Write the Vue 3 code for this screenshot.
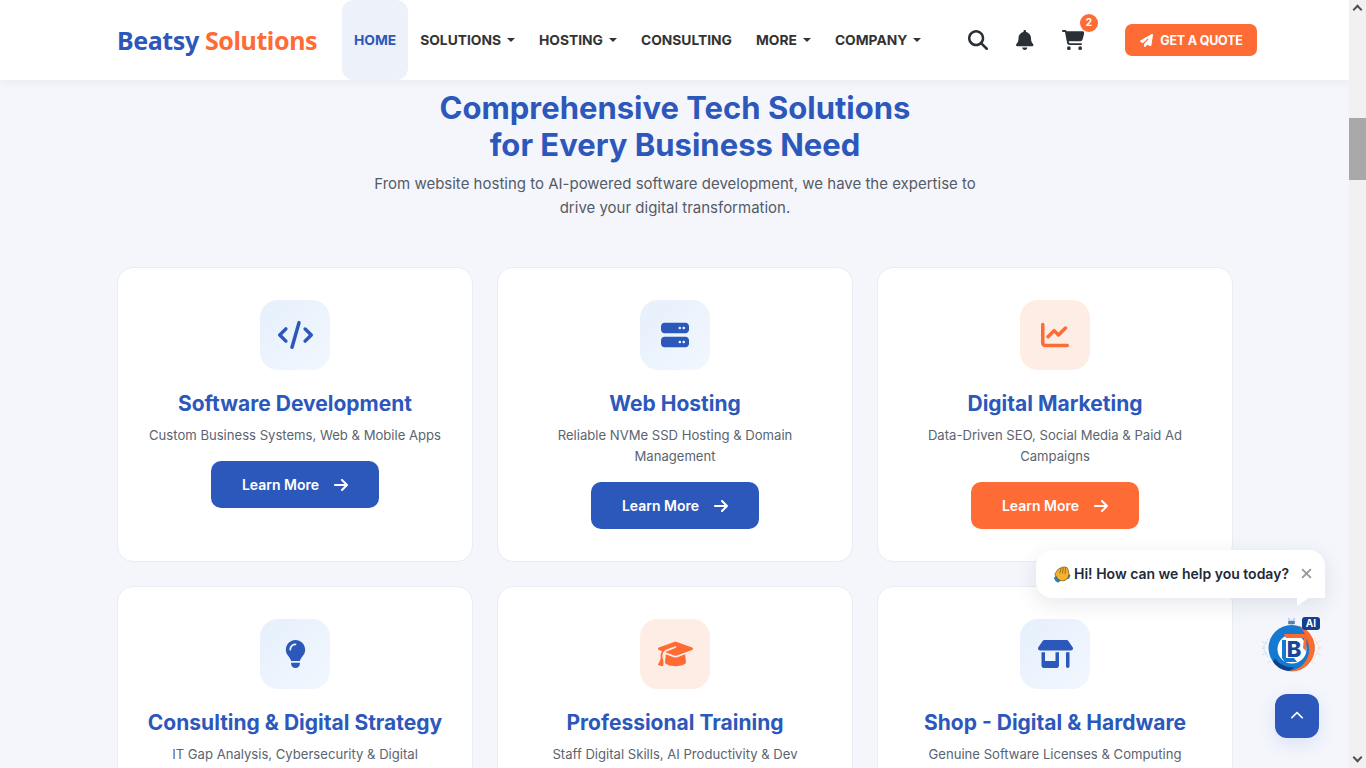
<template>
  <div class="page">
    <div class="viewport">
      <header class="topbar">
        <a href="#" class="logo">Beatsy <span>Solutions</span></a>
        <nav class="nav">
          <a v-for="item in navItems" :key="item.label" href="#" class="nav-link" :class="{ active: item.active }">
            {{ item.label }}
            <i v-if="item.caret" class="caret"></i>
          </a>
        </nav>
        <div class="tools">
          <svg class="tool search" viewBox="0 0 512 512"><path :d="icons.search" /></svg>
          <svg class="tool bell" viewBox="0 0 448 512"><path :d="icons.bell" /></svg>
          <div class="cart">
            <svg class="tool" viewBox="0 0 576 512"><path :d="icons.cart" /></svg>
            <span class="badge">2</span>
          </div>
        </div>
        <a href="#" class="quote">
          <svg viewBox="0 0 512 512"><path :d="icons.plane" /></svg>
          GET A QUOTE
        </a>
      </header>

      <main class="content">
        <div class="intro">
          <h1>Comprehensive Tech Solutions<br />for Every Business Need</h1>
          <p>From website hosting to AI-powered software development, we have the expertise to drive your digital transformation.</p>
        </div>

        <section class="cards">
          <article v-for="card in cards" :key="card.title" class="card">
            <div class="card-icon" :class="{ warm: card.warm }">
              <svg :viewBox="card.box" :style="{ width: card.width + 'px' }"><path :d="card.icon" /></svg>
            </div>
            <h3>{{ card.title }}</h3>
            <p>{{ card.text }}</p>
            <a href="#" class="learn" :class="{ warm: card.warmButton }">
              Learn More
              <svg viewBox="0 0 448 512"><path :d="icons.arrow" /></svg>
            </a>
          </article>
        </section>
      </main>

      <div class="bubble">
        <svg class="wave" viewBox="0 0 20 20">
          <path d="M1 14.500 4 11l5 6-3 2.500c-2 0-4-2-5-5ZM16 10l3.500 1-1.500 4-3.500 1Z" fill="#2a7fb2" />
          <path d="M3 8.500 6 4.500c.5-.8 1.500-.8 2-.4.3-1.400 1.800-2 2.800-1.300.6-.8 2-.9 2.800-.1.800-.3 2-.1 2.500.7l1.300 4.600c.5 2 .3 4-.7 5.800-1.500 2.800-4.200 4-6.800 3.700-2.800-.3-4.800-2-6-4.200L2.500 11c-.5-1-.2-1.800.5-2.500Z" fill="#f6b12d" stroke="#6e4c12" stroke-width=".8" />
          <path d="M7.500 9 9 4.200M10.500 9l1-6M13.500 9.500l.4-6.500" fill="none" stroke="#8a5f14" stroke-width=".9" stroke-linecap="round" />
        </svg>
        <span>Hi! How can we help you today?</span>
        <svg class="close" viewBox="0 0 10 10"><path d="M1 1l8 8M9 1l-8 8" /></svg>
      </div>

      <div class="bot">
        <svg viewBox="0 0 60 60">
          <g fill="none" stroke-width=".9" stroke-dasharray="1.500 1">
            <path d="M6 24 1 33l5 9M4 28l-4-1M3 33H0M4 38l-4 2M8 46l-3 2" stroke="#b4d2ec" />
            <path d="M52 23l6 10-6 10M54 28l5-2M56 33h4M54 38l5 2M50 47l3 2" stroke="#f7cdb6" />
          </g>
          <circle cx="29.500" cy="33" r="23" fill="#1479cf" />
          <path d="M11 46.500c4 6 10 9.500 16.500 9.500l4.500-3.500c-8 0-15-3-19-9Z" fill="#0f3f8a" />
          <path d="M36 10.500A23.500 23.500 0 0 1 30 56.500l-4-.5C40 55 48 44 47 33c-1-10-5-18-11-22.500Z" fill="#ff6b2c" />
          <circle cx="30" cy="34" r="14.500" fill="#fff" />
          <path d="M20 25v18l3 4h12l-3-4H24V25Z" fill="#1479cf" />
          <path d="M22 19h23l-3 4H24Z" fill="#ff6b2c" />
          <path d="M42 23l3-4-1 17-3-3Z" fill="#ff6b2c" />
          <text x="32" y="42" class="bot-b">B</text>
          <path d="M26.500 6h6v3h-6ZM27.500 5l-1-2M31.500 5l1-2" fill="#5b7fb8" stroke="#5b7fb8" stroke-width=".6" />
        </svg>
        <span class="ai">AI</span>
      </div>

      <a href="#" class="to-top">
        <svg viewBox="0 0 512 512"><path :d="icons.chevron" /></svg>
      </a>
    </div>

    <div class="scrollbar">
      <i class="arrow up"></i>
      <div class="track"><div class="thumb"></div></div>
      <i class="arrow down"></i>
    </div>
  </div>
</template>

<script setup>
const icons = {
  search: 'M416 208c0 45.900-14.900 88.300-40 122.700L502.600 457.400c12.500 12.500 12.500 32.800 0 45.300s-32.800 12.500-45.300 0L330.700 376c-34.400 25.200-76.800 40-122.700 40C93.100 416 0 322.900 0 208S93.100 0 208 0S416 93.100 416 208zM208 352a144 144 0 1 0 0-288 144 144 0 1 0 0 288z',
  bell: 'M224 0c-17.700 0-32 14.300-32 32V51.200C119 66 64 130.600 64 208v18.800c0 47-17.300 92.400-48.500 127.600l-7.400 8.300c-8.400 9.400-10.400 22.900-5.300 34.400S19.400 416 32 416H416c12.600 0 24-7.400 29.200-18.900s3.100-25-5.300-34.400l-7.400-8.300C401.300 319.200 384 273.900 384 226.800V208c0-77.400-55-142-128-156.800V32c0-17.700-14.300-32-32-32zm45.300 493.300c12-12 18.700-28.300 18.700-45.300H224 160c0 17 6.700 33.300 18.700 45.300s28.300 18.700 45.300 18.700s33.300-6.700 45.300-18.700z',
  cart: 'M0 24C0 10.700 10.700 0 24 0H69.500c22 0 41.500 12.800 50.600 32h411c26.300 0 45.500 25 38.600 50.400l-41 152.300c-8.500 31.400-37 53.300-69.500 53.300H170.700l5.400 28.500c2.200 11.300 12.100 19.500 23.600 19.500H488c13.300 0 24 10.700 24 24s-10.700 24-24 24H199.700c-34.600 0-64.300-24.600-70.700-58.500L77.400 54.500c-.7-3.800-4-6.500-7.900-6.500H24C10.700 48 0 37.300 0 24zM128 464a48 48 0 1 1 96 0 48 48 0 1 1 -96 0zm336-48a48 48 0 1 1 0 96 48 48 0 1 1 0-96z',
  plane: 'M498.100 5.600c10.100 7 15.400 19.100 13.500 31.200l-64 416c-1.500 9.700-7.400 18.200-16 23s-18.900 5.400-28 1.600L284 427.700l-68.500 74.100c-8.900 9.700-22.900 12.900-35.200 8.100S160 493.200 160 480V396.400c0-4 1.500-7.800 4.200-10.700L331.800 202.800c5.800-6.300 5.600-16-.4-22s-15.700-6.400-22-.7L106 360.800 17.700 316.600C7.100 311.300 .3 300.700 0 288.900s5.900-22.800 16.100-28.700l448-256c10.700-6.100 23.900-5.500 34 1.400z',
  arrow: 'M438.600 278.600c12.500-12.500 12.500-32.800 0-45.300l-160-160c-12.500-12.500-32.800-12.500-45.300 0s-12.500 32.800 0 45.300L338.800 224 32 224c-17.700 0-32 14.300-32 32s14.300 32 32 32l306.700 0L233.400 393.400c-12.500 12.500-12.500 32.800 0 45.300s32.800 12.500 45.300 0l160-160z',
  chevron: 'M233.400 105.400c12.500-12.500 32.800-12.500 45.300 0l192 192c12.500 12.500 12.500 32.800 0 45.300s-32.800 12.500-45.300 0L256 173.300 86.600 342.600c-12.500 12.500-32.800 12.500-45.300 0s-12.500-32.800 0-45.300l192-192z',
}

const navItems = [
  { label: 'Home', active: true },
  { label: 'Solutions', caret: true },
  { label: 'Hosting', caret: true },
  { label: 'Consulting' },
  { label: 'More', caret: true },
  { label: 'Company', caret: true },
]

const cards = [
  {
    title: 'Software Development',
    text: 'Custom Business Systems, Web & Mobile Apps',
    box: '0 0 640 512',
    width: 35,
    icon: 'M392.800 1.200c-17-4.900-34.700 5-39.600 22l-128 448c-4.900 17 5 34.700 22 39.600s34.700-5 39.600-22l128-448c4.900-17-5-34.700-22-39.600zm80.600 120.100c-12.500 12.500-12.500 32.800 0 45.300L562.700 256l-89.400 89.400c-12.500 12.500-12.500 32.800 0 45.300s32.800 12.500 45.300 0l112-112c12.500-12.500 12.500-32.800 0-45.300l-112-112c-12.500-12.500-32.800-12.500-45.300 0zm-306.700 0c-12.500-12.500-32.800-12.500-45.300 0l-112 112c-12.500 12.500-12.500 32.800 0 45.300l112 112c12.500 12.500 32.800 12.500 45.300 0s12.500-32.800 0-45.300L77.300 256l89.400-89.400c12.500-12.500 12.500-32.800 0-45.300z',
  },
  {
    title: 'Web Hosting',
    text: 'Reliable NVMe SSD Hosting & Domain Management',
    box: '0 0 512 512',
    width: 28,
    icon: 'M64 32C28.700 32 0 60.700 0 96v64c0 35.300 28.700 64 64 64H448c35.300 0 64-28.700 64-64V96c0-35.300-28.700-64-64-64H64zm280 72a24 24 0 1 1 0 48 24 24 0 1 1 0-48zm48 24a24 24 0 1 1 48 0 24 24 0 1 1 -48 0zM64 288c-35.300 0-64 28.700-64 64v64c0 35.300 28.700 64 64 64H448c35.300 0 64-28.700 64-64V352c0-35.300-28.700-64-64-64H64zm280 72a24 24 0 1 1 0 48 24 24 0 1 1 0-48zm48 24a24 24 0 1 1 48 0 24 24 0 1 1 -48 0z',
  },
  {
    title: 'Digital Marketing',
    text: 'Data-Driven SEO, Social Media & Paid Ad Campaigns',
    box: '0 0 512 512',
    width: 28,
    warm: true,
    warmButton: true,
    icon: 'M64 64c0-17.700-14.300-32-32-32S0 46.300 0 64V400c0 44.200 35.800 80 80 80H480c17.700 0 32-14.300 32-32s-14.300-32-32-32H80c-8.800 0-16-7.200-16-16V64zm406.600 86.600c12.500-12.500 12.500-32.800 0-45.300s-32.800-12.500-45.300 0L320 210.700l-57.400-57.400c-12.500-12.500-32.800-12.500-45.300 0l-112 112c-12.500 12.500-12.500 32.800 0 45.300s32.800 12.500 45.300 0L240 221.300l57.400 57.400c12.500 12.500 32.800 12.500 45.300 0l128-128z',
  },
  {
    title: 'Consulting & Digital Strategy',
    text: 'IT Gap Analysis, Cybersecurity & Digital Transformation',
    box: '0 0 384 512',
    width: 21,
    icon: 'M272 384c9.600-31.900 29.500-59.100 49.200-86.200l0 0c5.200-7.100 10.400-14.200 15.400-21.400c19.800-28.500 31.400-63 31.400-100.300C368 78.800 289.200 0 192 0S16 78.800 16 176c0 37.300 11.600 71.900 31.400 100.300c5 7.200 10.200 14.300 15.400 21.400l0 0c19.800 27.100 39.700 54.400 49.200 86.200H272zM192 512c44.200 0 80-35.800 80-80V416H112v16c0 44.200 35.800 80 80 80zM112 176c0 8.800-7.200 16-16 16s-16-7.200-16-16c0-61.900 50.100-112 112-112c8.800 0 16 7.200 16 16s-7.200 16-16 16c-44.200 0-80 35.800-80 80z',
  },
  {
    title: 'Professional Training',
    text: 'Staff Digital Skills, AI Productivity & Dev Bootcamps',
    box: '0 0 640 512',
    width: 35,
    warm: true,
    icon: 'M320 32c-8.100 0-16.100 1.400-23.700 4.100L15.800 137.400C6.300 140.900 0 149.900 0 160s6.300 19.100 15.800 22.600l57.900 20.900C57.300 229.300 48 259.800 48 291.900v28.100c0 28.400-10.800 57.700-22.300 80.800c-6.500 13-13.900 25.800-22.500 37.600C0 442.700-.9 448.300 .9 453.400s6 8.900 11.200 10.200l64 16c4.200 1.100 8.700 .3 12.400-2s6.300-6.100 7.100-10.400c8.600-42.800 4.300-81.200-2.100-108.700C90.300 344.300 86 329.800 80 316.500V291.900c0-30.200 10.200-58.700 27.900-81.500c12.900-15.500 29.600-28 49.200-35.700l157-61.700c8.200-3.200 17.500 .8 20.700 9s-.8 17.500-9 20.700l-157 61.700c-12.400 4.900-23.300 12.400-32.200 21.600l159.600 57.600c7.600 2.700 15.600 4.100 23.700 4.100s16.100-1.400 23.700-4.100L624.200 182.600c9.500-3.400 15.800-12.500 15.800-22.600s-6.300-19.100-15.800-22.600L343.700 36.100C336.100 33.400 328.100 32 320 32zM128 408c0 35.300 86 72 192 72s192-36.700 192-72L496.700 262.600 354.500 314c-11.100 4-22.800 6-34.500 6s-23.500-2-34.500-6L143.300 262.600 128 408z',
  },
  {
    title: 'Shop - Digital & Hardware',
    text: 'Genuine Software Licenses & Computing Equipment',
    box: '0 0 640 512',
    width: 35,
    icon: 'M36.800 192H603.200c20.300 0 36.800-16.500 36.800-36.800c0-7.300-2.200-14.400-6.200-20.400L558.200 21.400C549.300 8 534.400 0 518.300 0H121.700c-16 0-31 8-39.900 21.400L6.200 134.700c-4 6.100-6.200 13.200-6.200 20.400C0 175.500 16.500 192 36.800 192zM64 224V384v80c0 26.500 21.500 48 48 48H336c26.500 0 48-21.500 48-48V384 224H320V384H128V224H64zm448 0V480c0 17.700 14.300 32 32 32s32-14.300 32-32V224H512z',
  },
]
</script>

<style>
html, body {
  margin: 0;
  height: 100%;
  overflow: hidden;
}
</style>

<style scoped>
.page {
  display: flex;
  width: 100%;
  height: 768px;
  overflow: hidden;
  font-family: Inter, "Liberation Sans", sans-serif;
  background: #f4f6fc;
}

.viewport {
  position: relative;
  flex: 1;
  min-width: 0;
  overflow: hidden;
}

a {
  text-decoration: none;
}

/* Top bar */
.topbar {
  position: relative;
  z-index: 5;
  display: flex;
  align-items: center;
  height: 80px;
  padding-left: 117px;
  background: #fff;
  box-shadow: 0 2px 10px rgba(20, 30, 60, 0.06);
}

.logo {
  width: 225px;
  flex: none;
  font-family: "Noto Sans", sans-serif;
  font-size: 25px;
  font-weight: 700;
  letter-spacing: -0.4px;
  color: #2d58bb;
}

.logo span {
  color: #ff6b35;
}

.nav {
  display: flex;
  align-self: stretch;
}

.nav-link {
  display: flex;
  align-items: center;
  gap: 6px;
  padding: 0 12px;
  border-radius: 12px;
  font-size: 13.8px;
  font-weight: 700;
  text-transform: uppercase;
  color: #333;
}

.nav-link.active {
  background: #edf1fa;
  color: #2d58bb;
}

.caret {
  width: 0;
  height: 0;
  border-top: 4px solid currentColor;
  border-left: 4px solid transparent;
  border-right: 4px solid transparent;
}

.tools {
  display: flex;
  align-items: center;
  margin-left: 35px;
  gap: 28px;
}

.tool {
  display: block;
  height: 20px;
  fill: #2b2f36;
}

.search {
  width: 20px;
}

.bell {
  width: 17.5px;
}

.cart {
  position: relative;
}

.cart .tool {
  width: 22.5px;
}

.badge {
  position: absolute;
  top: -16px;
  left: 18px;
  width: 18px;
  height: 18px;
  border-radius: 50%;
  background: #ff6b35;
  color: #fff;
  font-size: 10.5px;
  font-weight: 700;
  line-height: 18px;
  text-align: center;
}

.quote {
  display: flex;
  align-items: center;
  gap: 7px;
  height: 32px;
  margin-left: 41px;
  padding: 0 14px 0 15px;
  border-radius: 7px;
  background: #ff6b35;
  color: #fff;
  font-size: 12.5px;
  font-weight: 700;
  letter-spacing: -0.2px;
}

.quote svg {
  width: 13px;
  height: 13px;
  fill: #fff;
}

/* Content */
.content {
  padding: 9px 116px 0 117px;
}

.intro {
  text-align: center;
}

.intro h1 {
  margin: 0;
  font-size: 31px;
  font-weight: 700;
  line-height: 37px;
  color: #2d58bb;
}

.intro p {
  width: 640px;
  margin: 9px auto 0;
  font-size: 15px;
  line-height: 24px;
  color: #555b66;
}

.cards {
  display: grid;
  grid-template-columns: repeat(3, 356px);
  grid-auto-rows: 295px;
  gap: 24px;
  margin-top: 47px;
}

.card {
  display: flex;
  flex-direction: column;
  align-items: center;
  box-sizing: border-box;
  padding: 32px 24px;
  border: 1px solid #e8ecf4;
  border-radius: 16px;
  background: #fff;
  text-align: center;
}

.card-icon {
  display: flex;
  align-items: center;
  justify-content: center;
  flex: none;
  width: 70px;
  height: 70px;
  border-radius: 18px;
  background: linear-gradient(135deg, #e6f0fb, #f1f7fe);
  fill: #2d58bb;
}

.card-icon.warm {
  background: #fdede4;
  fill: #ff6b35;
}

.card-icon svg {
  height: 28px;
}

.card h3 {
  margin: 21px 0 0;
  font-size: 21px;
  font-weight: 700;
  line-height: 26px;
  white-space: nowrap;
  color: #2d58bb;
}

.card p {
  margin: 8px 0 0;
  font-size: 13.1px;
  line-height: 21px;
  color: #5b6470;
}

.learn {
  display: flex;
  align-items: center;
  justify-content: center;
  gap: 15px;
  width: 168px;
  height: 47px;
  flex: none;
  margin-top: 15px;
  border-radius: 10px;
  background: #2d58bb;
  color: #fff;
  font-size: 14px;
  font-weight: 600;
}

.learn.warm {
  background: #ff6b35;
}

.learn svg {
  width: 14px;
  height: 16px;
  fill: #fff;
}

/* Floating widgets */
.bubble {
  position: absolute;
  z-index: 6;
  top: 550px;
  left: 1036px;
  display: flex;
  align-items: center;
  box-sizing: border-box;
  width: 289px;
  height: 48px;
  padding: 0 13px 1px 17px;
  border-radius: 16px 16px 0 16px;
  background: #fff;
  box-shadow: 0 6px 22px rgba(20, 30, 60, 0.1);
  color: #1f2937;
  font-size: 14px;
  font-weight: 600;
}

.bubble::after {
  content: "";
  position: absolute;
  top: 48px;
  left: 261px;
  border-top: 8px solid #fff;
  border-right: 12px solid transparent;
}

.wave {
  width: 18px;
  height: 18px;
  margin-right: 3px;
  flex: none;
}

.close {
  width: 11px;
  height: 11px;
  margin-left: auto;
  fill: none;
  stroke: #999;
  stroke-width: 1.7;
}

.bot {
  position: absolute;
  z-index: 6;
  top: 615px;
  left: 1262px;
  width: 60px;
  height: 60px;
}

.bot svg {
  display: block;
  width: 60px;
  height: 60px;
}

.bot-b {
  font-family: Inter, sans-serif;
  font-size: 22px;
  font-weight: 800;
  fill: #17479a;
  text-anchor: middle;
}

.ai {
  position: absolute;
  top: 2px;
  left: 40px;
  width: 18px;
  height: 13px;
  border-radius: 3px;
  background: #123f8f;
  color: #fff;
  font-size: 10px;
  font-weight: 700;
  line-height: 13px;
  text-align: center;
}

.to-top {
  position: absolute;
  z-index: 6;
  top: 694px;
  left: 1275px;
  display: flex;
  align-items: center;
  justify-content: center;
  width: 44px;
  height: 44px;
  border-radius: 12px;
  background: #2d58bb;
  box-shadow: 0 6px 18px rgba(45, 88, 187, 0.12);
}

.to-top svg {
  width: 14px;
  height: 14px;
  fill: #fff;
}

/* Scrollbar */
.scrollbar {
  display: flex;
  flex-direction: column;
  flex: none;
  width: 17px;
  background: #f1f1f1;
}

.track {
  flex: 1;
  padding-top: 101px;
}

.thumb {
  height: 62px;
  background: #a8a8a8;
}

.arrow {
  position: relative;
  height: 17px;
}

.arrow::before {
  content: "";
  position: absolute;
  left: 5px;
  width: 5px;
  height: 5px;
  border-top: 2px solid #505050;
  border-left: 2px solid #505050;
}

.arrow.up::before {
  top: 6px;
  transform: rotate(45deg);
}

.arrow.down::before {
  top: 3px;
  transform: rotate(225deg);
}
</style>
